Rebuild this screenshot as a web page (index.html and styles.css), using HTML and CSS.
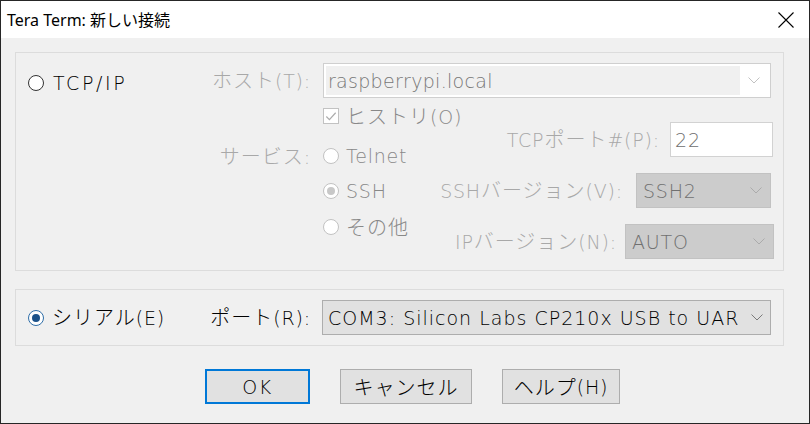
FILE: index.html
```html
<!DOCTYPE html>
<html lang="ja">
<head>
<meta charset="utf-8">
<title>Tera Term: 新しい接続</title>
<link rel="stylesheet" href="styles.css">
</head>
<body>
<div class="window">
  <div class="titlebar">
    <span class="title">Tera Term: 新しい接続</span>
    <svg class="close" width="16" height="16" viewBox="0 0 16 16"><path d="M0.5 0.5 L15.5 15.5 M15.5 0.5 L0.5 15.5" stroke="#000" stroke-width="1.1" fill="none"/></svg>
  </div>
  <div class="content">
    <div class="group group-tcp">
      <div class="mode-col mode-tcp">
        <div class="opt opt-mode"><span class="radio"></span><span class="opt-text opt-tcp">TCP/IP</span></div>
      </div>
      <div class="tcp-main">
        <div class="host-row">
          <span class="lbl"><span class="ja">ホスト</span>(T):</span>
          <div class="combo combo-host">
            <span class="combo-edit">raspberrypi.local</span>
            <span class="combo-btn"><svg width="12" height="7" viewBox="0 0 12 7"><path d="M0.5 0.5 L6 6 L11.5 0.5" stroke="#c2c2c2" stroke-width="1" fill="none"/></svg></span>
          </div>
        </div>
        <div class="lower">
          <span class="lbl lbl-svc"><span class="ja">サービス</span>:</span>
          <div class="opt opt-dis r-hist"><span class="check"><svg width="15" height="15" viewBox="0 0 15 15"><path d="M2.5 7.5 L5.8 10.8 L12.5 3.5" stroke="#acacac" stroke-width="1.3" fill="none"/></svg></span><span class="opt-text"><span class="ja">ヒストリ</span>(O)</span></div>
          <div class="opt opt-dis r-telnet"><span class="radio radio-dis"></span><span class="opt-text">Telnet</span></div>
          <div class="opt opt-dis r-ssh"><span class="radio radio-dis radio-dis-on"></span><span class="opt-text">SSH</span></div>
          <div class="opt opt-dis r-other"><span class="radio radio-dis"></span><span class="opt-text"><span class="ja">その他</span></span></div>
          <div class="settings">
            <div class="set-row">
              <span class="lbl-plain">TCP<span class="ja">ポート</span>#(P):</span>
              <span class="field field-port">22</span>
            </div>
            <div class="set-row set-ssh">
              <span class="lbl-plain">SSH<span class="ja">バージョン</span>(V):</span>
              <span class="select select-ssh"><span class="select-text">SSH2</span><svg width="12" height="7" viewBox="0 0 12 7"><path d="M0.5 0.5 L6 6 L11.5 0.5" stroke="#ababab" stroke-width="1" fill="none"/></svg></span>
            </div>
            <div class="set-row set-ip">
              <span class="lbl-plain">IP<span class="ja">バージョン</span>(N):</span>
              <span class="select select-ip"><span class="select-text">AUTO</span><svg width="12" height="7" viewBox="0 0 12 7"><path d="M0.5 0.5 L6 6 L11.5 0.5" stroke="#ababab" stroke-width="1" fill="none"/></svg></span>
            </div>
          </div>
        </div>
      </div>
    </div>

    <div class="group group-serial">
      <div class="mode-col">
        <div class="opt opt-mode opt-serial"><span class="radio radio-on"></span><span class="opt-text"><span class="ja">シリアル</span>(E)</span></div>
      </div>
      <span class="lbl lbl-port"><span class="ja">ポート</span>(R):</span>
      <div class="combo combo-com">
        <span class="combo-text">COM3: Silicon Labs CP210x USB to UAR</span>
        <svg width="12" height="7" viewBox="0 0 12 7"><path d="M0.5 0.5 L6 6 L11.5 0.5" stroke="#7a7a7a" stroke-width="1" fill="none"/></svg>
      </div>
    </div>

    <div class="buttons">
      <button class="btn btn-ok">OK</button>
      <button class="btn btn-cancel"><span class="ja">キャンセル</span></button>
      <button class="btn btn-help"><span class="ja">ヘルプ</span>(H)</button>
    </div>
  </div>
</div>
</body>
</html>
```

FILE: styles.css
```css
html, body {
  margin: 0;
  padding: 0;
  background: #f0f0f0;
}

.window {
  width: 810px;
  height: 424px;
  box-sizing: border-box;
  border: 1px solid #262626;
  background: #f0f0f0;
  display: flex;
  flex-direction: column;
  font-family: "DejaVu Sans", "Noto Sans CJK JP", sans-serif;
  font-size: 19px;
  font-weight: 300;
  letter-spacing: 0.8px;
  color: #000;
}

.ja {
  font-family: "Noto Sans CJK JP", sans-serif;
  font-size: 20px;
  font-weight: 300;
  letter-spacing: 1px;
}

.titlebar {
  height: 37px;
  flex: none;
  background: #fff;
  display: flex;
  align-items: center;
  justify-content: space-between;
  padding: 0 15px 0 6px;
}

.title {
  font-family: "Noto Sans", "Noto Sans CJK JP", sans-serif;
  font-size: 16px;
  font-weight: 400;
  letter-spacing: 0;
  color: #000;
  line-height: 20px;
  margin-top: 1px;
}

.close {
  display: block;
  margin-top: 1px;
}

.content {
  flex: 1;
  padding: 14px 0 0 14px;
  display: flex;
  flex-direction: column;
}

.group {
  width: 769px;
  box-sizing: border-box;
  border: 1px solid #dcdcdc;
  display: flex;
}

.group-tcp {
  height: 219px;
  padding: 10px 10px 0 0;
}

.group-serial {
  height: 57px;
  margin-top: 18px;
  padding: 0;
  align-items: center;
}

.mode-col {
  width: 185px;
  flex: none;
  padding-left: 12px;
  box-sizing: border-box;
}

.mode-tcp {
  padding-top: 2px;
}

.opt {
  display: flex;
  align-items: center;
  height: 24px;
  white-space: nowrap;
}

.opt-mode {
  height: 35px;
}

.opt-text {
  margin-left: 9px;
  line-height: 24px;
}

.opt-tcp {
  letter-spacing: 2.6px;
}

.opt-serial .opt-text {
  margin-left: 8px;
}

.opt-dis .opt-text {
  color: #888888;
  margin-left: 7px;
}

.radio {
  width: 16px;
  height: 16px;
  box-sizing: border-box;
  border-radius: 50%;
  border: 1px solid #333;
  background: #fff;
  flex: none;
  display: flex;
  align-items: center;
  justify-content: center;
}

.radio-dis {
  border-color: #c2c2c2;
}

.radio-dis-on::after {
  content: "";
  width: 8px;
  height: 8px;
  border-radius: 50%;
  background: #c8c8c8;
}

.radio-on {
  border-color: #2f6ea8;
}

.radio-on::after {
  content: "";
  width: 8px;
  height: 8px;
  border-radius: 50%;
  background: #1b5189;
}

.check {
  width: 16px;
  height: 16px;
  box-sizing: border-box;
  border: 1px solid #c2c2c2;
  background: #fff;
  flex: none;
  display: flex;
  align-items: center;
  justify-content: center;
}

.check svg {
  display: block;
}

.tcp-main {
  flex: 1;
  min-width: 0;
  display: flex;
  flex-direction: column;
}

.host-row {
  display: flex;
  align-items: center;
  height: 35px;
}

.lbl {
  width: 110px;
  flex: none;
  text-align: right;
  color: #a8a8a8;
  white-space: nowrap;
  line-height: 24px;
}

.lbl-plain {
  color: #a8a8a8;
  white-space: nowrap;
  line-height: 24px;
}

.combo {
  box-sizing: border-box;
  height: 35px;
  display: flex;
  align-items: center;
}

.combo-host {
  width: 448px;
  margin-left: 12px;
  border: 1px solid #cfcfcf;
  background: #fff;
  padding: 2px;
}

.combo-edit {
  flex: 1;
  align-self: stretch;
  background: #f0f0f0;
  color: #777;
  display: flex;
  align-items: center;
  padding-left: 2px;
  letter-spacing: 0.3px;
}

.combo-btn {
  width: 28px;
  display: flex;
  justify-content: center;
  align-items: center;
}

.combo-btn svg, .combo svg, .select svg {
  display: block;
}

.lower {
  display: grid;
  grid-template-columns: 110px auto 1fr;
  grid-template-rows: auto auto auto auto 1fr;
  column-gap: 12px;
  align-items: start;
}

.lbl-svc {
  grid-column: 1;
  grid-row: 2;
  margin-top: 16px;
  height: 24px;
}

.r-hist { grid-column: 2; grid-row: 1; margin-top: 6px; }
.r-telnet { grid-column: 2; grid-row: 2; margin-top: 16px; }
.r-ssh { grid-column: 2; grid-row: 3; margin-top: 11px; }
.r-other { grid-column: 2; grid-row: 4; margin-top: 12px; }

.settings {
  grid-column: 2 / 4;
  grid-row: 1 / -1;
  display: flex;
  flex-direction: column;
  align-items: flex-end;
  padding-top: 24px;
  gap: 16px;
}

.set-row {
  display: flex;
  align-items: center;
  gap: 10px;
}

.set-ssh {
  gap: 13px;
  margin-right: 2px;
}

.set-ip {
  gap: 8px;
  margin-right: -1px;
}

.field {
  box-sizing: border-box;
  height: 35px;
  border: 1px solid #d2d2d2;
  background: #fff;
  color: #6d6d6d;
  display: flex;
  align-items: center;
  padding-left: 4px;
}

.field-port {
  width: 103px;
}

.select {
  box-sizing: border-box;
  height: 35px;
  border: 1px solid #c2c2c2;
  background: #cccccc;
  display: flex;
  align-items: center;
  justify-content: space-between;
  padding: 0 8px 0 6px;
}

.select-text {
  color: #707070;
}

.select-ssh {
  width: 135px;
}

.select-ip {
  width: 149px;
}

.lbl-port {
  color: #000;
}

.combo-com {
  width: 449px;
  margin-left: 11px;
  border: 1px solid #adadad;
  background: #e1e1e1;
  padding: 0 7px 0 5px;
  justify-content: space-between;
}

.combo-text {
  color: #000;
  white-space: nowrap;
  overflow: hidden;
  letter-spacing: 1px;
}

.buttons {
  display: flex;
  gap: 30px;
  margin-top: 23px;
  padding-left: 190px;
}

.btn {
  box-sizing: border-box;
  height: 35px;
  margin: 0;
  padding: 0;
  border: 1px solid #adadad;
  background: #e1e1e1;
  color: #000;
  font-family: "DejaVu Sans", "Noto Sans CJK JP", sans-serif;
  font-size: 19px;
  font-weight: 300;
  letter-spacing: 0.8px;
  display: flex;
  align-items: center;
  justify-content: center;
}

.btn-ok {
  width: 105px;
  border: 2px solid #0078d7;
  letter-spacing: 1.5px;
}

.btn-cancel {
  width: 132px;
}

.btn-help {
  width: 118px;
}
```
